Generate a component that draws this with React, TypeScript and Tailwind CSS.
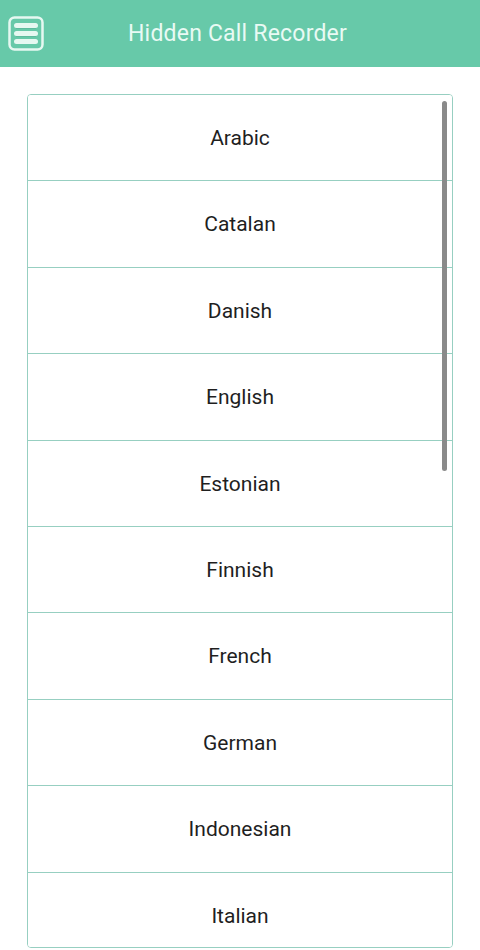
import { useState } from 'react';

const LANGUAGES = [
  'Arabic',
  'Catalan',
  'Danish',
  'English',
  'Estonian',
  'Finnish',
  'French',
  'German',
  'Indonesian',
  'Italian',
];

function MenuIcon() {
  return (
    <svg width="36" height="36" viewBox="0 0 36 36" fill="none">
      <rect x="1.5" y="1.5" width="33" height="32" rx="5" stroke="#e6f8f1" strokeWidth="2.5" />
      <rect x="6" y="7" width="24" height="5" rx="2.5" fill="#e6f8f1" />
      <rect x="6" y="15" width="24" height="5" rx="2.5" fill="#e6f8f1" />
      <rect x="6" y="23" width="24" height="5" rx="2.5" fill="#e6f8f1" />
      <line x1="8" y1="12.5" x2="28" y2="12.5" stroke="#5bb89a" strokeWidth="0.8" />
      <line x1="8" y1="20.5" x2="28" y2="20.5" stroke="#5bb89a" strokeWidth="0.8" />
    </svg>
  );
}

export default function App() {
  const [selected, setSelected] = useState<string | null>(null);

  return (
    <div
      className="w-[480px] h-[950px] bg-white overflow-hidden flex flex-col"
      style={{ fontFamily: 'Roboto, "Noto Sans", sans-serif' }}
    >
      <div className="h-[67px] bg-[#67c9a9] flex items-center shrink-0">
        <button className="ml-[8px] mt-[1px] w-[36px] h-[36px] flex items-center justify-center">
          <MenuIcon />
        </button>
        <h1 className="ml-[84px] mt-[2px] text-[23px] text-[#e9faf4] tracking-[0.2px]">Hidden Call Recorder</h1>
      </div>

      <div className="pt-[27px] px-[27px]">
        <div className="relative border border-[#97cfc1] rounded-[4px] h-[854px] overflow-hidden">
          {LANGUAGES.map((lang, i) => (
            <button
              key={lang}
              onClick={() => setSelected(lang)}
              className={`w-full h-[86.4px] shrink-0 flex items-center justify-center pt-[2px] text-[21px] text-[#1f1f1f] ${
                i < LANGUAGES.length - 1 ? 'border-b border-[#97cfc1]' : ''
              } ${selected === lang ? 'bg-[#f1faf7]' : 'bg-white'}`}
            >
              {lang}
            </button>
          ))}
          <div className="absolute right-[5px] top-[6px] w-[5px] h-[370px] rounded-full bg-[#8a8a8a]" />
        </div>
      </div>
    </div>
  );
}
